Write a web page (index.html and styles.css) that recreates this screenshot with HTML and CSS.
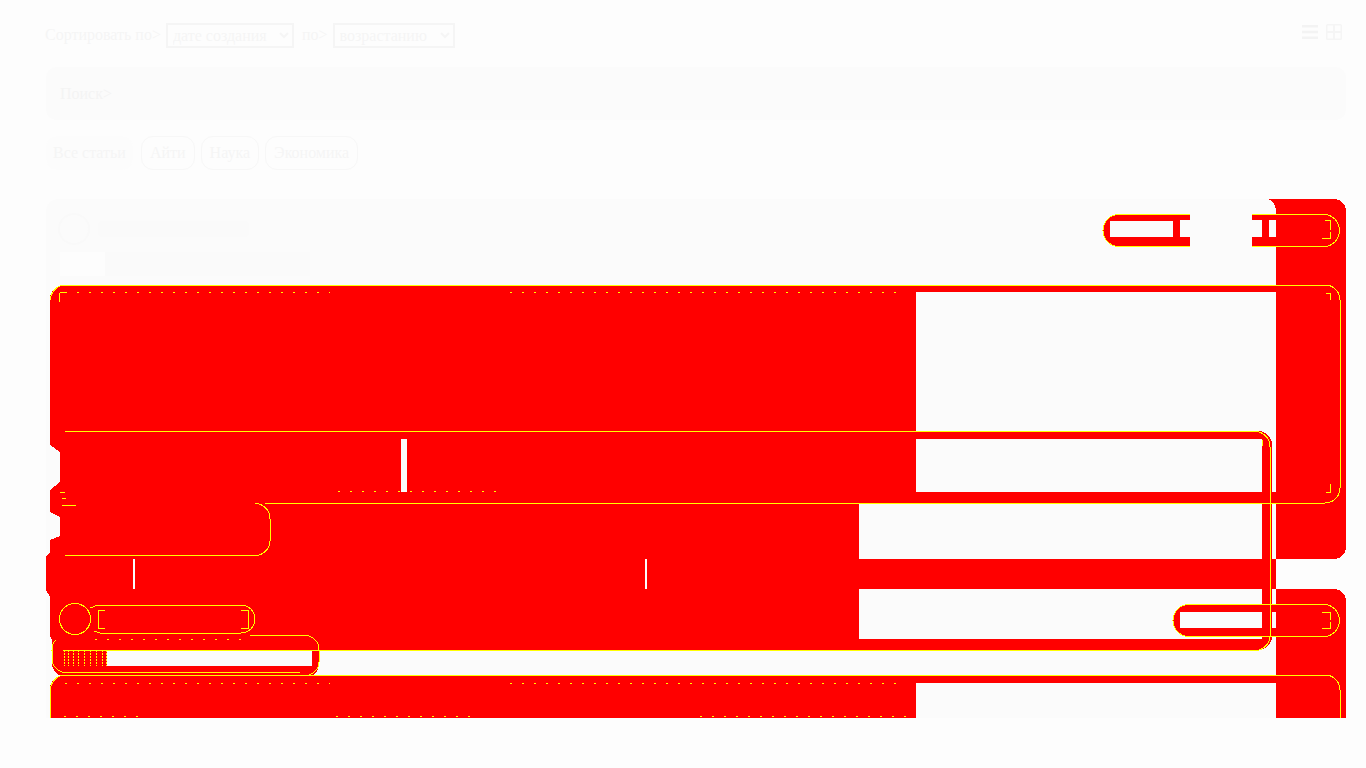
FILE: index.html
```html
<!DOCTYPE html>
<html lang="ru">
<head>
    <meta charset="UTF-8">
    <meta name="viewport" content="width=device-width, initial-scale=1.0">
    <title>Статьи</title>
    <link rel="stylesheet" href="styles.css">
</head>
<body>
    <div class="page">
        <div class="toolbar">
            <form class="sort">
                <label for="sort_by">Сортировать по&gt;</label>
                <select id="sort_by"><option>дате создания</option></select>
                <label for="sort_dir" class="sort-second">по&gt;</label>
                <select id="sort_dir"><option>возрастанию</option></select>
            </form>
            <div class="view-switch">
                <svg width="16" height="14" viewBox="0 0 16 14"><path d="M0 0h16v2.4H0zM0 5.800h16v2.400H0zM0 11.600h16V14H0z" fill="#f3f3f3"/></svg>
                <svg width="16" height="16" viewBox="0 0 16 16"><path d="M1.500 0h13A1.500 1.500 0 0 1 16 1.500v13a1.500 1.500 0 0 1-1.500 1.500h-13A1.500 1.500 0 0 1 0 14.500v-13A1.500 1.500 0 0 1 1.500 0zM1.500 1.500V7h5.500V1.500zM9 1.500V7h5.500V1.500zM1.500 9v5.500H7V9zM9 9v5.500h5.500V9z" fill="#f5f5f5" fill-rule="evenodd"/></svg>
            </div>
        </div>

        <div class="search">Поиск&gt;</div>

        <div class="tags">
            <a class="tag tag-active">Все статьи</a>
            <a class="tag">Айти</a>
            <a class="tag">Наука</a>
            <a class="tag">Экономика</a>
        </div>

        <div class="feed">
            <article class="card card-first">
                <div class="card-head">
                    <span class="avatar"></span>
                    <span class="author"></span>
                </div>
                <div class="card-title"><span class="card-title-start"></span></div>
            </article>
            <article class="card">
                <div class="card-head">
                    <span class="avatar"></span>
                    <span class="author"></span>
                </div>
            </article>
        </div>
    </div>

    <!-- red and yellow marks that lie over the cards -->
    <svg class="marks" width="1366" height="718" viewBox="0 0 1366 718" shape-rendering="crispEdges">
        <g fill="#f00">
            <path d="M1268 199h66a12 12 0 0 1 12 12v336a12 12 0 0 1-12 12h-58V212q0-10-8-13z"/>
            <path d="M1276 589h58a12 12 0 0 1 12 12v117h-70z"/>
            <path d="M64 285H916V503H859V650H319V664a13 13 0 0 1-13 13H66a14 14 0 0 1-14-14V640L50 636V597L46 590V556L50 552V540L60 536V517L50 512V490L60 482V452L50 445V299a14 14 0 0 1 14-14z"/>
            <rect x="916" y="285" width="360" height="7"/>
            <rect x="916" y="492" width="360" height="11"/>
            <rect x="859" y="559" width="417" height="30"/>
            <path d="M916 431h342a14 14 0 0 1 14 14v191a14 14 0 0 1-14 14H859V639h403V439H916z"/>
            <path d="M64 675H1276v8H916v35H50V689a14 14 0 0 1 14-14z"/>
            <path d="M1119 214h71v6h-10v17h10v10h-71a16 16 0 0 1 0-33zM1110 221v16h63v-16z" fill-rule="evenodd"/>
            <path d="M1252 214h24v6h-7v17h7v10h-24v-10h10v-17h-10z"/>
            <path d="M1189 604h87v8h-96v16h96v9h-87a16.500 16.500 0 0 1 0-33z"/>
        </g>
        <g fill="#fbfbfb">
            <rect x="401" y="439" width="6" height="53"/>
            <rect x="133" y="559" width="2" height="30"/>
            <rect x="645" y="559" width="2" height="30"/>
            <rect x="107" y="650" width="205" height="16"/>
        </g>
        <g fill="none" stroke="#ff0" stroke-width="1">
            <path d="M1190 214.500H1119a16 16 0 0 0 0 32h71M1252 214.500h72a15.500 16 0 0 1 0 32h-72"/>
            <path d="M1173 620a16 16 0 0 1 16-15.500h135a15.500 16 0 0 1 0 32H1189a16 16 0 0 1-16-16.500z"/>
            <path d="M50.500 300a15 15 0 0 1 15-15H1325a15 15 0 0 1 15 15v188a15 15 0 0 1-15 15H265"/>
            <path d="M65 431.500H1255a15 15 0 0 1 15 15v189a15 15 0 0 1-15 15H319"/>
            <path d="M62 498.500h4M62 505.500h14M255 503.500a15 15 0 0 1 15 15v22a15 15 0 0 1-15 15H65"/>
            <path d="M50.500 718V690a15 15 0 0 1 15-15H1325a15 15 0 0 1 15 15v28"/>
            <path d="M250 635.500H305a14 14 0 0 1 14 14v12a14 14 0 0 1-14 14H66M300 672.500H66a14 14 0 0 1-14-14v-8q0-8 4-10"/>
            <circle cx="75" cy="619" r="15.500"/>
            <path d="M90 608l8-3h143a14 14 0 0 1 0 28H100l-6-2"/>
            <path d="M105 610h-7v18h7M241 610h7v18h-7"/>
            <path d="M63 650.500H319M59.500 292.500V302M59.500 292.500h6M60 492h5M1330.500 484v8h-5M1330.500 300v-7h-5M1262 439.500v6M1330 230v-10h-5M1330 232v6h-8M1330 620v-8h-8M1330 622v6h-8"/>
            <path d="M65 292.500H330M510 292.500H906M338 491.500H500M65 683.500H330M510 683.500H906M64 716.500H140M336 716.500H470M700 716.500H906M95 639.500H250" stroke-dasharray="2 10"/>
            <path d="M64 650v16M68 650v16M73 650v16M78 650v16M84 650v16M90 650v16M96 650v16M102 650v16M106 650v16" stroke-dasharray="2 1"/>
        </g>
    </svg>
</body>
</html>
```

FILE: styles.css
```css
* {
    box-sizing: border-box;
}
body {
    margin: 0;
    background-color: #fdfdfd;
    color: #f5f5f5;
    font-family: "Liberation Serif", serif;
    font-size: 16px;
    overflow: hidden;
}
.page {
    height: 100vh;
    padding: 23px 20px 50px 46px;
}
.toolbar {
    display: flex;
    justify-content: space-between;
    height: 44px;
}
.sort {
    display: flex;
    align-items: flex-start;
    margin-left: -1px;
}
.sort label {
    margin-right: 5px;
    line-height: 24px;
}
.sort-second {
    margin-left: 8px;
}
select {
    height: 25px;
    padding: 0 1px;
    border: 2px solid #f5f5f5;
    border-radius: 0;
    background-color: #fdfdfd;
    color: #f5f5f5;
    font-family: inherit;
    font-size: 16px;
}
#sort_by {
    width: 128px;
}
#sort_dir {
    width: 122px;
}
.view-switch {
    display: flex;
    gap: 8px;
    margin-right: 4px;
    margin-top: 1px;
}
.view-switch svg:first-child {
    margin-top: 1px;
}
.search {
    height: 53px;
    padding-left: 14px;
    border-radius: 10px;
    background-color: #fbfbfb;
    color: #f4f4f4;
    line-height: 53px;
}
.tags {
    display: flex;
    gap: 6px;
    margin-top: 16px;
    height: 34px;
}
.tag {
    padding: 0 8px;
    border: 1px solid #f7f7f7;
    border-radius: 12px;
    line-height: 32px;
}
.tag-active {
    margin-right: 2px;
    padding: 0 7px;
    border: none;
    background-color: #fcfcfc;
    line-height: 34px;
}
.feed {
    height: 519px;
    margin-top: 29px;
    overflow: hidden;
}
.card {
    height: 360px;
    padding: 14px 12px;
    border-radius: 12px;
    background-color: #fbfbfb;
}
.card-first {
    margin-bottom: 30px;
}
.card-head {
    display: flex;
    align-items: center;
    gap: 8px;
}
.avatar {
    width: 32px;
    height: 32px;
    border: 2px solid #f9f9f9;
    border-radius: 50%;
}
.author {
    width: 151px;
    height: 16px;
    border-radius: 4px;
    background-color: #fafafa;
}
.card-title {
    width: 250px;
    height: 24px;
    margin: 7px 0 0 2px;
    background-color: #fafafa;
}
.card-title-start {
    display: block;
    width: 45px;
    height: 24px;
    background-color: #fdfdfd;
}
.marks {
    position: absolute;
    left: 0;
    top: 0;
    pointer-events: none;
}
```
